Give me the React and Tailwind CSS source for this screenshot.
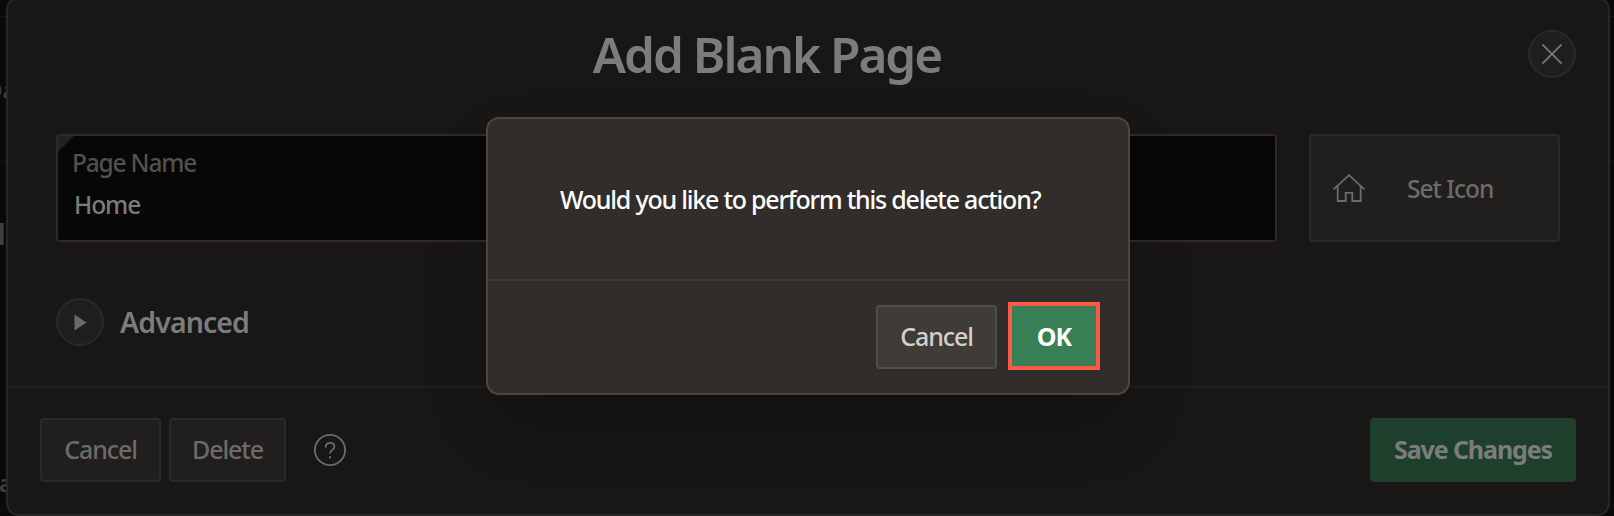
function CloseIcon() {
  return (
    <svg width="20" height="20" viewBox="0 0 20 20" fill="none" stroke="#7a7977" strokeWidth="1.7">
      <path d="M0.4 0.4 19.6 19.6M19.6 0.4 0.4 19.6" />
    </svg>
  );
}

function HomeIcon() {
  return (
    <svg width="32" height="28" viewBox="0 0 32 28" fill="none" stroke="#6c6b69" strokeWidth="1.8">
      <path d="M0.6 15.4 16 1.2 31.4 15.4" />
      <path d="M4.7 12V27H12.7V18.9H19.3V27H27.7V12" />
    </svg>
  );
}

function HelpIcon() {
  return (
    <svg width="32" height="32" viewBox="0 0 32 32" fill="none" stroke="#6c6b69" strokeWidth="1.8">
      <circle cx="16" cy="16" r="15.1" />
      <path d="M11.7 13.4C11.7 10.5 13.6 8.9 16.1 8.9S20.4 10.5 20.4 12.8C20.4 16.3 16 15.8 16 19.6" />
      <path d="M16 22.2V24.2" strokeWidth="2" />
    </svg>
  );
}

function Backdrop() {
  return (
    <div className="absolute inset-0 bg-[#0a0a0a] font-semibold text-[#42413f]">
      <div className="absolute inset-x-0 top-4 h-px bg-[#151413]" />
      <div className="absolute inset-x-0 top-[161px] h-px bg-[#151413]" />
      <span className="absolute -left-[15px] top-[72px] text-[24px] leading-[36px]">Da</span>
      <span className="absolute -left-[20px] top-[216px] text-[28px] leading-[36px]">ult</span>
      <span className="absolute -left-[1px] top-[465px] text-[24px] leading-[36px]">a</span>
    </div>
  );
}

export default function App() {
  return (
    <div className="relative h-[516px] w-[1614px] overflow-hidden font-['Noto_Sans',sans-serif] whitespace-nowrap">
      <Backdrop />

      <section className="relative -mt-[3px] ml-[6px] flex h-[519px] w-[1604px] flex-col rounded-[13px] border-2 border-[#282725] bg-[#181715]">
        <header className="flex h-[133px] pl-8 pr-8 pt-[31px]">
          <h1 className="flex h-12 flex-1 items-center justify-center pr-[34px] pt-[2px] text-[49.5px] font-semibold leading-none tracking-[-2px] text-[#7c7c7c]">
            Add Blank Page
          </h1>
          <button className="flex size-12 items-center justify-center rounded-full border-2 border-[#2a2927] bg-[#201f1d]">
            <CloseIcon />
          </button>
        </header>

        <div className="mt-[2px] flex h-[108px] gap-8 px-12 font-medium">
          <div className="relative w-[1221px] rounded-[4px] border-2 border-[#2c2926] bg-[#070707] pl-[14px] pt-[9px]">
            <svg className="absolute left-0 top-0" width="16" height="16" viewBox="0 0 16 16">
              <path d="M0 0H16L0 16Z" fill="#222222" />
            </svg>
            <div className="text-[24.5px] leading-9 tracking-[-1.2px] text-[#52504e]">Page Name</div>
            <div className="pl-[2px] pt-[6px] text-[24.5px] leading-9 tracking-[-1.1px] text-[#7c7c7c]">Home</div>
          </div>
          <button className="flex w-[251px] items-center rounded-[4px] border-2 border-[#2a2927] bg-[#201f1d] pl-[22px] text-[24.5px] tracking-[-1px] text-[#6c6b69]">
            <HomeIcon />
            <span className="pl-[42px] pt-[2px]">Set Icon</span>
          </button>
        </div>

        <div className="mt-14 flex h-12 items-center gap-4 px-12">
          <button className="flex size-12 items-center justify-center rounded-full border-2 border-[#2a2927] bg-[#201f1d]">
            <svg width="13" height="17" viewBox="0 0 13 17">
              <path d="M0.5 0.5 12.5 8.5 0.5 16.5Z" fill="#6c6b69" />
            </svg>
          </button>
          <span className="text-[28.5px] font-semibold leading-none tracking-[-0.9px] text-[#7c7c7c]">Advanced</span>
        </div>

        <footer className="mt-10 flex h-[127px] items-start border-t-2 border-[#201f1d] px-8 pt-[30px] text-[25px] font-medium tracking-[-1.1px] text-[#6c6b69]">
          <button className="h-16 w-[121px] rounded-[4px] border-2 border-[#2a2927] bg-[#201f1d]">Cancel</button>
          <button className="ml-2 h-16 w-[117px] rounded-[4px] border-2 border-[#2a2927] bg-[#201f1d]">Delete</button>
          <button className="ml-7 mt-4">
            <HelpIcon />
          </button>
          <button className="ml-auto h-16 w-[206px] rounded-[4px] bg-[#1d3f2c] font-bold tracking-[-1.1px] text-[#7c7c7c]">
            Save Changes
          </button>
        </footer>
      </section>

      <div
        role="dialog"
        className="absolute left-[486px] top-[117px] flex h-[278px] w-[644px] flex-col rounded-[13px] border-2 border-[#4a4640] bg-[#312d2a] shadow-[0_32px_60px_-16px_rgba(0,0,0,0.35)]"
      >
        <p className="h-[160px] pl-[72px] pt-[62px] text-[25px] font-medium leading-9 tracking-[-1.22px] text-white">
          Would you like to perform this delete action?
        </p>
        <div className="flex flex-1 justify-end border-t-2 border-[#403c38] pr-7 pt-[21px] text-[25px]">
          <button className="mr-[11px] mt-[3px] h-16 w-[121px] rounded-[4px] border-2 border-[#514d48] bg-[#3f3b36] font-medium tracking-[-1.1px] text-[#d2d0cd]">
            Cancel
          </button>
          <button className="h-[68px] w-[92px] border-4 border-[#fe5a48] bg-[#397f55] pt-[2px] font-bold tracking-[-0.9px] text-white">
            OK
          </button>
        </div>
      </div>
    </div>
  );
}
